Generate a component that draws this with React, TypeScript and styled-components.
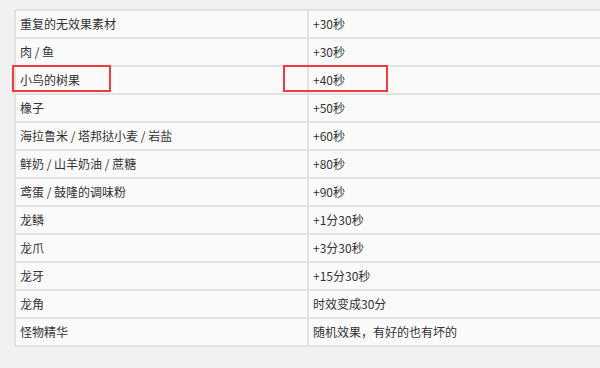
import React from 'react';
import styled, { createGlobalStyle } from 'styled-components';

const rows: [string, string][] = [
    ['重复的无效果素材', '+30秒'],
    ['肉 / 鱼', '+30秒'],
    ['小鸟的树果', '+40秒'],
    ['橡子', '+50秒'],
    ['海拉鲁米 / 塔邦挞小麦 / 岩盐', '+60秒'],
    ['鲜奶 / 山羊奶油 / 蔗糖', '+80秒'],
    ['鸢蛋 / 鼓隆的调味粉', '+90秒'],
    ['龙鳞', '+1分30秒'],
    ['龙爪', '+3分30秒'],
    ['龙牙', '+15分30秒'],
    ['龙角', '时效变成30分'],
    ['怪物精华', '随机效果，有好的也有坏的'],
];

const GlobalStyle = createGlobalStyle`
    html, body {
        margin: 0;
        padding: 0;
        background: #f1f1f1;
        overflow: hidden;
    }
`;

const SPage = styled.div`
    position: relative;
    width: 600px;
    height: 368px;
    overflow: hidden;
    padding: 9px 0 0 14px;
    box-sizing: border-box;
    font-family: 'Noto Sans CJK SC', 'Noto Sans', sans-serif;
`;

const STable = styled.table`
    width: 640px;
    border-collapse: collapse;
    background: #fafafa;
    border: 2px solid #e2e2e2;
    table-layout: fixed;
`;

const SCell = styled.td<{ $w?: number }>`
    width: ${(p) => (p.$w ? `${p.$w}px` : 'auto')};
    height: 26px;
    padding: 0 0 0 4px;
    border: 2px solid #e2e2e2;
    font-size: 12px;
    line-height: 26px;
    color: #333;
    white-space: nowrap;
`;

const SMark = styled.div<{ $x: number; $w: number }>`
    position: absolute;
    left: ${(p) => p.$x}px;
    top: 65px;
    width: ${(p) => p.$w}px;
    height: 27px;
    border: 2px solid #ef3b3b;
    box-sizing: border-box;
`;

const App = (): JSX.Element => {
    return (
        <>
            <GlobalStyle />
            <SPage>
                <STable>
                    <tbody>
                        {rows.map(([item, effect]) => (
                            <tr key={item}>
                                <SCell $w={287}>{item}</SCell>
                                <SCell>{effect}</SCell>
                            </tr>
                        ))}
                    </tbody>
                </STable>
                <SMark $x={12} $w={99} />
                <SMark $x={283} $w={105} />
            </SPage>
        </>
    );
};

export default App;
